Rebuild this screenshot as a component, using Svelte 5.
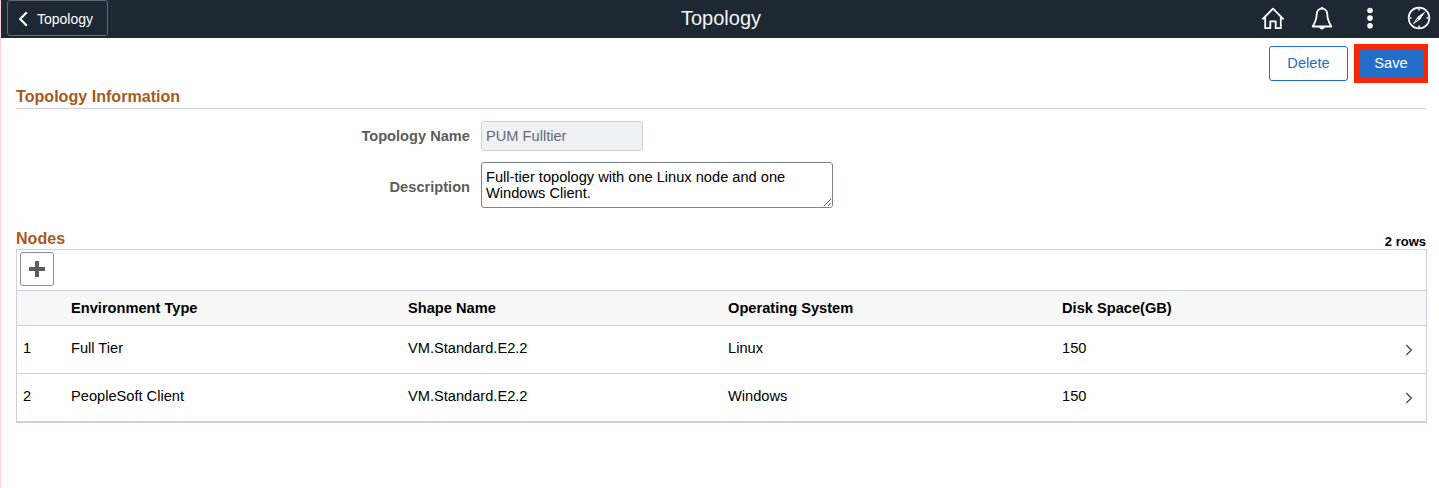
<script>
  let name = $state('PUM Fulltier');
  let description = $state('Full-tier topology with one Linux node and one Windows Client.');
  const columns = ['Environment Type', 'Shape Name', 'Operating System', 'Disk Space(GB)'];
  const nodes = [
    ['Full Tier', 'VM.Standard.E2.2', 'Linux', '150'],
    ['PeopleSoft Client', 'VM.Standard.E2.2', 'Windows', '150']
  ];
</script>

<div class="page">
  <header>
    <button class="back">
      <svg width="10" height="16" viewBox="0 0 10 16"><path d="M8.800 1.300 2.200 8l6.600 6.700" fill="none" stroke="#fff" stroke-width="2.100" /></svg>
      <span>Topology</span>
    </button>
    <h1>Topology</h1>
    <nav>
      <svg class="home" width="24" height="24" viewBox="0 0 24 24" fill="none" stroke="#fff" stroke-width="1.8" stroke-linejoin="round">
        <path d="M1.400 13.300 12 2.600l10.600 10.700M4.200 11v11.200h5.100v-6.900h5.400v6.900h5.100V11" />
      </svg>
      <svg class="bell" width="24" height="24" viewBox="0 0 24 24" fill="none" stroke="#fff" stroke-width="1.8" stroke-linejoin="round">
        <path d="M12 2.700c-3.300 0-5.300 2.400-5.300 5.600 0 5.700-1.700 8.400-4 12.200h18.600c-2.300-3.800-4-6.500-4-12.200 0-3.200-2-5.600-5.300-5.600Z" />
        <path d="M9.200 21h5.600c-.3 1.600-1.300 2.400-2.800 2.400S9.500 22.600 9.200 21ZM10.200 2.700C10.400 1.500 11.100.9 12 .9s1.600.6 1.800 1.800Z" fill="#fff" stroke="none" />
      </svg>
      <svg class="dots" width="8" height="24" viewBox="0 0 8 24" fill="#fff"><circle cx="4" cy="4.500" r="2.800" /><circle cx="4" cy="12.100" r="2.800" /><circle cx="4" cy="19.700" r="2.800" /></svg>
      <svg class="compass" width="24" height="24" viewBox="0 0 24 24" fill="none" stroke="#fff" stroke-width="1.600">
        <circle cx="12" cy="12" r="10.400" />
        <path d="M12 2.500v2M12 19.500v2M2.500 12h2M19.500 12h2" stroke-width="1.600" />
        <path d="M18.600 5.300 13.300 13.300 5.400 18.700l5.300-8Z" fill="#fff" stroke="none" />
        <path d="m8.600 15.500 2.600-2.700" stroke="#1e2833" stroke-width=".8" />
      </svg>
    </nav>
  </header>

  <main>
    <div class="actions">
      <button class="delete">Delete</button>
      <button class="save">Save</button>
    </div>

    <h2 class="info">Topology Information</h2>

    <div class="form">
      <label for="name">Topology Name</label>
      <input id="name" bind:value={name} disabled />
      <label class="low" for="description">Description</label>
      <div class="area">
        <textarea id="description" bind:value={description}></textarea>
        <svg width="9" height="9" viewBox="0 0 9 9"><path d="M.8 8.200 8.200.8M4.800 8.200l3.400-3.400" stroke="#555" stroke-width="1" /></svg>
      </div>
    </div>

    <div class="nodes-head">
      <h2>Nodes</h2>
      <span>2 rows</span>
    </div>

    <section class="grid">
      <div class="toolbar">
        <button class="add" aria-label="Add">
          <svg width="16" height="16" viewBox="0 0 16 16"><path d="M8 0v16M0 8h16" stroke="#5c5c5c" stroke-width="4" /></svg>
        </button>
      </div>
      <div class="row head">
        <span></span>
        {#each columns as c}<span>{c}</span>{/each}
        <span></span>
      </div>
      {#each nodes as node, i}
        <div class="row">
          <span class="index">{i + 1}</span>
          {#each node as cell}<span>{cell}</span>{/each}
          <svg width="8" height="12" viewBox="0 0 8 12"><path d="M1.300 1l5 5-5 5" fill="none" stroke="#555" stroke-width="1.500" /></svg>
        </div>
      {/each}
    </section>
  </main>
</div>

<style>
  :global(body) { background: #fff; }
  .page, button, input, textarea {
    font-family: "Liberation Sans", Arial, sans-serif;
    font-size: 14.64px;
  }
  .page { box-sizing: border-box; height: 488px; border-left: 1px solid #ffd3e4; color: #000; }
  button, input, textarea { box-sizing: border-box; margin: 0; }
  svg { display: block; flex: none; }
  h1, h2 { margin: 0; }
  header {
    display: grid;
    grid-template-columns: 1fr auto 1fr;
    height: 38px;
    padding: 0 8px 0 6px;
    background: #1e2833;
    color: #fff;
  }
  .back {
    display: flex;
    align-items: center;
    gap: 9px;
    width: 101px;
    height: 36px;
    padding: 2px 0 0 10px;
    border: 1px solid #5d6978;
    border-radius: 3px;
    background: transparent;
    color: #fff;
    font-size: 14px;
  }
  h1 { font-size: 20px; font-weight: 400; line-height: 37px; padding-left: 4px; color: #f4f4f4; }
  nav { display: flex; justify-content: flex-end; padding-top: 6px; }
  .home { margin-right: 25px; }
  .bell { margin-right: 32px; }
  .dots { margin-right: 33px; }
  main { padding: 6px 13px 0 15px; }
  .actions { display: flex; justify-content: flex-end; align-items: center; gap: 6px; height: 38px; }
  .delete {
    width: 79px;
    height: 35px;
    border: 1px solid #226ec9;
    border-radius: 3px;
    background: #fff;
    color: #226ec9;
  }
  .save { width: 74px; height: 39px; padding: 0; border: 5px solid #fd2600; background: #226ec9; color: #fff; margin-right: -2px; }
  h2 { color: #a75a1d; font-size: 16.1px; line-height: 18px; }
  .info { height: 21px; padding-top: 5px; border-bottom: 1px solid #ccd0d8; }
  .form {
    display: grid;
    grid-template-columns: 454px 352px;
    column-gap: 11px;
    row-gap: 11px;
    align-items: center;
    padding-top: 12px;
  }
  label { text-align: right; font-weight: 700; color: #5c5c5c; }
  .low { padding-top: 3px; }
  input {
    width: 162px;
    height: 30px;
    padding: 0 4px;
    border: 1px solid #ccd1da;
    border-radius: 3px;
    background: #eff1f5;
    color: #636b74;
  }
  .area { position: relative; height: 46px; }
  textarea {
    display: block;
    width: 352px;
    height: 46px;
    padding: 6px 4px 0;
    overflow: hidden;
    resize: none;
    border: 1px solid #7a8490;
    border-radius: 3px;
    line-height: 16px;
    color: #000;
  }
  .area svg { position: absolute; right: 1px; bottom: 1px; }
  .nodes-head { display: flex; justify-content: space-between; height: 20px; margin-top: 21px; }
  .nodes-head span { font-size: 13px; font-weight: 700; line-height: 25px; }
  .grid { border: 1px solid #ccd0d8; border-bottom-width: 2px; margin-right: -1px; }
  .toolbar { height: 40px; padding: 2px 3px; box-sizing: border-box; }
  .add {
    display: grid;
    place-items: center;
    width: 34px;
    height: 34px;
    padding: 0;
    border: 1px solid #848d98;
    border-radius: 3px;
    background: #fff;
  }
  .row {
    display: grid;
    grid-template-columns: 54px 337px 320px 334px 343px auto;
    box-sizing: border-box;
    height: 48px;
    border-top: 1px solid #ccd0d8;
    line-height: 44px;
  }
  .row svg { margin-top: 18px; }
  .index { padding-left: 6px; }
  .head { height: 35px; background: #f7f7f7; font-weight: 700; line-height: 34px; }
</style>
